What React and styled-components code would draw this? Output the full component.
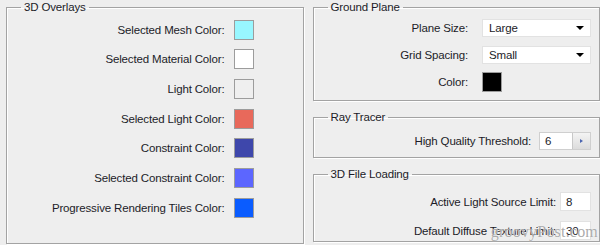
import React from 'react';
import styled, { createGlobalStyle } from 'styled-components';

const GlobalStyle = createGlobalStyle`
  html, body {
    margin: 0;
    padding: 0;
    background: #eeeeee;
  }
  body {
    font-family: "Liberation Sans", Arial, sans-serif;
    font-size: 11.5px;
    letter-spacing: -0.15px;
    color: #1c1c28;
  }
`;

const Page = styled.div`
  position: relative;
  display: flex;
  gap: 9px;
  width: 600px;
  height: 245px;
  padding-left: 6px;
  box-sizing: border-box;
  overflow: hidden;
`;

const Group = styled.fieldset`
  margin: 0;
  padding: ${(p) => p.$pad || '0'};
  border: 1px solid #a3a3a3;
  box-shadow: inset 1px 1px 0 #ffffff, 1px 1px 0 #ffffff;
  min-width: 0;
  box-sizing: border-box;
  width: ${(p) => p.$width || 'auto'};
  height: ${(p) => p.$height || 'auto'};
`;

const Legend = styled.legend`
  margin-left: 14px;
  padding: 0 3px;
  line-height: 14px;
  font-size: 11.5px;
`;

const Column = styled.div`
  display: flex;
  flex-direction: column;
  gap: 9px;
  width: 288px;
`;

const SwatchGrid = styled.div`
  display: grid;
  grid-template-columns: 1fr 20px;
  grid-auto-rows: 29.67px;
  column-gap: 9px;
  align-items: center;
  padding-right: 49px;
`;

const FormGrid = styled.div`
  display: grid;
  grid-template-columns: 1fr ${(p) => p.$control};
  grid-auto-rows: ${(p) => p.$row};
  column-gap: ${(p) => p.$gap};
  align-items: center;
  padding-right: 8px;
`;

const Label = styled.span`
  text-align: right;
  white-space: nowrap;
`;

const Swatch = styled.div`
  width: 20px;
  height: 20px;
  box-sizing: border-box;
  border: 1px solid #9c9c9c;
  background: ${(p) => p.$color};
`;

const SelectBox = styled.div`
  display: flex;
  align-items: center;
  justify-content: space-between;
  height: 18px;
  box-sizing: border-box;
  padding: 0 6px 0 6px;
  background: #ffffff;
  border: 1px solid #e2e2e2;
`;

const Caret = styled.span`
  width: 0;
  height: 0;
  border-left: 4px solid transparent;
  border-right: 4px solid transparent;
  border-top: 4px solid #000;
`;

const Field = styled.div`
  display: flex;
  align-items: center;
  height: 19px;
  box-sizing: border-box;
  padding-left: 5px;
  background: #ffffff;
  border: 1px solid #e2e2e2;
`;

const Spinner = styled.div`
  display: flex;
  height: 18px;
  box-sizing: border-box;
  border: 1px solid #cfcfcf;
  background: #ffffff;
`;

const SpinValue = styled.span`
  flex: 1;
  display: flex;
  align-items: center;
  padding-left: 5px;
`;

const SpinButton = styled.span`
  width: 17px;
  display: flex;
  align-items: center;
  justify-content: center;
  border-left: 1px solid #c8c8c8;
  background: linear-gradient(#f4f4f4, #dcdcdc);
  &::after {
    content: '';
    border-top: 2px solid transparent;
    border-bottom: 2px solid transparent;
    border-left: 3px solid #4a64b0;
  }
`;

const Watermark = styled.div`
  position: absolute;
  right: 2px;
  bottom: 4px;
  font-family: "Liberation Serif", "Times New Roman", serif;
  font-size: 16px;
  letter-spacing: 0.2px;
  color: rgba(150, 150, 150, 0.8);
  text-shadow: 0 0 1px #ffffff;
  pointer-events: none;
`;

const overlays = [
  ['Selected Mesh Color:', '#98f7ff'],
  ['Selected Material Color:', '#ffffff'],
  ['Light Color:', '#efefef'],
  ['Selected Light Color:', '#e8695b'],
  ['Constraint Color:', '#3e47ab'],
  ['Selected Constraint Color:', '#5c66ff'],
  ['Progressive Rendering Tiles Color:', '#0a5cff'],
];

const App = () => (
  <Page>
    <GlobalStyle />
    <Group $width="298px" $height="244px" $pad="1px 0 0 0">
      <Legend>3D Overlays</Legend>
      <SwatchGrid>
        {overlays.map(([label, color]) => (
          <React.Fragment key={label}>
            <Label>{label}</Label>
            <Swatch $color={color} />
          </React.Fragment>
        ))}
      </SwatchGrid>
    </Group>
    <Column>
      <Group $height="101px">
        <Legend>Ground Plane</Legend>
        <FormGrid $control="109px" $row="27px" $gap="14px">
          <Label>Plane Size:</Label>
          <SelectBox>
            Large
            <Caret />
          </SelectBox>
          <Label>Grid Spacing:</Label>
          <SelectBox>
            Small
            <Caret />
          </SelectBox>
          <Label>Color:</Label>
          <Swatch $color="#000000" />
        </FormGrid>
      </Group>
      <Group $height="48px" $pad="8px 0 0 0">
        <Legend>Ray Tracer</Legend>
        <FormGrid $control="52px" $row="18px" $gap="8px">
          <Label>High Quality Threshold:</Label>
          <Spinner>
            <SpinValue>6</SpinValue>
            <SpinButton />
          </Spinner>
        </FormGrid>
      </Group>
      <Group $height="75px" $pad="6px 0 0 0">
        <Legend>3D File Loading</Legend>
        <FormGrid $control="31px" $row="29px" $gap="4px">
          <Label>Active Light Source Limit:</Label>
          <Field>8</Field>
          <Label>Default Diffuse Texture Limit:</Label>
          <Field>30</Field>
        </FormGrid>
      </Group>
    </Column>
    <Watermark>groovyPost.com</Watermark>
  </Page>
);

export default App;
